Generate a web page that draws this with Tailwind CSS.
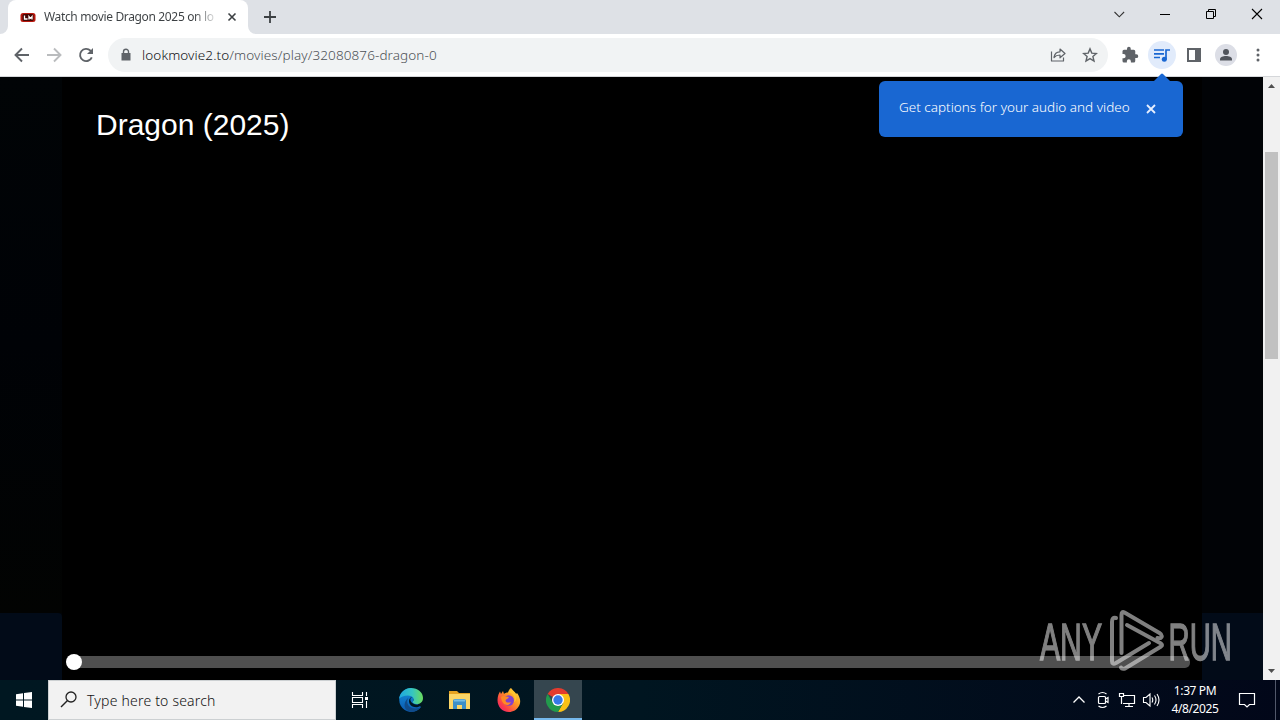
<!DOCTYPE html>
<html lang="en">
<head>
<meta charset="utf-8">
<title>Dragon (2025)</title>
<script src="https://cdn.jsdelivr.net/npm/@tailwindcss/browser@4"></script>
</head>
<body class="w-[1280px] h-[720px] overflow-hidden flex flex-col bg-black font-['Noto_Sans',sans-serif]">
<!-- Tab strip -->
<header class="h-[34px] shrink-0 bg-[#dee1e6] flex items-stretch">
  <div class="relative ml-2 w-[240px] bg-white rounded-t-lg flex items-center pl-3">
    <svg class="absolute -left-2 bottom-0" width="8" height="8"><path d="M8 0v8H0a8 8 0 0 0 8-8z" fill="#fff"/></svg>
    <svg class="absolute -right-2 bottom-0" width="8" height="8"><path d="M0 0v8h8a8 8 0 0 1-8-8z" fill="#fff"/></svg>
    <svg class="shrink-0" width="16" height="16"><rect x=".5" y="4" width="15" height="9" rx="2.5" fill="#b8180e"/><rect x="2.500" y="5" width="11" height="7" rx="1.5" fill="#420604"/><path d="M4.500 6.500V10h3M9 10.500v-3l1.500 1.800L12 7.500v3" fill="none" stroke="#fff" stroke-width="1.300"/></svg>
    <div class="ml-2 w-[170px] whitespace-nowrap text-[12px] leading-4 tracking-[-0.35px] text-transparent bg-clip-text bg-linear-to-r from-[#3c4043] from-88% to-[#3c4043]/20 to-100%">Watch movie Dragon 2025 on lo</div>
    <svg class="ml-[10px]" width="16" height="16"><path d="M4.500 4.500l7 7m0-7l-7 7" stroke="#3c4043" stroke-width="1.6"/></svg>
  </div>
  <svg class="ml-[14px] mt-[9px]" width="16" height="16"><path d="M8 2v12M2 8h12" stroke="#3c4043" stroke-width="1.8"/></svg>
  <div class="ml-auto flex items-start text-black">
    <svg width="46" height="28"><path d="M18.500 12l4.800 4.800 4.800-4.800" fill="none" stroke="#333" stroke-width="1.100"/></svg>
    <svg width="46" height="28"><path d="M18 14.500h10" stroke="#000"/></svg>
    <svg width="46" height="28"><path d="M18.500 11.500h7v7h-7zM20.500 11.500v-2h7v7h-2" fill="none" stroke="#000"/></svg>
    <svg width="46" height="28"><path d="M18 9l10 10m0-10l-10 10" stroke="#000" stroke-width="1.100"/></svg>
  </div>
</header>
<!-- Toolbar -->
<nav class="h-[43px] shrink-0 bg-white border-b border-[#d5d7da] flex items-center pl-3 relative">
  <svg class="mr-3" width="20" height="20" viewBox="0 0 20 20"><path d="M17 10H4M10 3.500L3.500 10l6.500 6.500" fill="none" stroke="#5f6368" stroke-width="1.900"/></svg>
  <svg class="mr-3" width="20" height="20" viewBox="0 0 20 20"><path d="M3 10h13M10 3.500l6.500 6.500-6.500 6.500" fill="none" stroke="#babcbe" stroke-width="1.900"/></svg>
  <svg width="20" height="20" viewBox="0 0 20 20"><path d="M15.800 12.300A6.100 6.100 0 1 1 14.500 5.700l1.500 1.600" fill="none" stroke="#5f6368" stroke-width="1.900"/><path d="M17 3v6h-6z" fill="#5f6368"/></svg>
  <div class="ml-3 w-[1000px] h-[34px] rounded-full bg-[#f1f3f4] flex items-center pl-[10px] pr-[10px]">
    <svg width="16" height="16"><path d="M3.500 6h9v7.500h-9z" fill="#5f6368"/><path d="M5.500 6.500V4.700a2.500 2.500 0 0 1 5 0v1.800" fill="none" stroke="#5f6368" stroke-width="1.400"/></svg>
    <span class="ml-2 text-[13.500px] leading-5 tracking-[0.1px] font-light whitespace-nowrap text-[#4c5055]"><span class="text-[#101114]">lookmovie2.to</span>/movies/play/32080876-dragon-0</span>
    <svg class="ml-auto" width="16" height="16" viewBox="0 0 16 16"><path d="M1.500 4.500v9.500h12v-3.500M4 10.500c.5-4 2.500-5.700 6-5.700V2l5 4.500-5 4.300V8c-2.700 0-4.500.7-6 2.500z" fill="none" stroke="#5f6368" stroke-width="1.200" stroke-linejoin="round"/></svg>
    <svg class="ml-4" width="16" height="16" viewBox="0 0 16 16"><path d="M8 1.900l1.800 4.200 4.600.4-3.500 3 1.100 4.500L8 11.600 4 14l1.100-4.500-3.500-3 4.600-.4z" fill="none" stroke="#5f6368" stroke-width="1.400"/></svg>
  </div>
  <svg class="ml-[13px] mr-px" width="18" height="18" viewBox="0 0 24 24"><path d="M20.500 11H19V7a2 2 0 0 0-2-2h-4V3.500a2.500 2.500 0 0 0-5 0V5H4a2 2 0 0 0-2 2v3.800h1.500a2.700 2.700 0 0 1 0 5.400H2V20a2 2 0 0 0 2 2h3.800v-1.500a2.700 2.700 0 0 1 5.400 0V22H17a2 2 0 0 0 2-2v-4h1.500a2.500 2.500 0 0 0 0-5z" fill="#5f6368"/></svg>
  <div class="ml-2 size-[28px] rounded-full bg-[#e1ebfb] flex items-center justify-center"><svg width="20" height="20" viewBox="0 0 20 20"><path d="M2 5h10M2 8.800h10M2 12.500h6M14 14.500V5h4" fill="none" stroke="#1967d2" stroke-width="1.700"/><circle cx="12.300" cy="14.300" r="2.500" fill="#1967d2"/></svg></div>
  <svg class="ml-[11px]" width="14" height="14"><path d="M0 0h14v14H0zM2 2v10h6V2z" fill="#5f6368" fill-rule="evenodd"/></svg>
  <div class="ml-[14px] size-[22px] rounded-full bg-[#dcdee6] flex items-center justify-center"><svg width="16" height="16"><circle cx="8" cy="5" r="3" fill="#50545c"/><path d="M2 13.500v-1.300c0-2 3-3.200 6-3.200s6 1.200 6 3.200v1.300z" fill="#50545c"/></svg></div>
  <svg class="ml-[19px]" width="4" height="16"><g fill="#5f6368"><circle cx="2" cy="3" r="1.500"/><circle cx="2" cy="8" r="1.500"/><circle cx="2" cy="13" r="1.500"/></g></svg>
  <!-- Live caption bubble -->
  <div class="absolute left-[879px] top-[47px] z-20 w-[304px] h-[56px] rounded-[6px] bg-[#1967d2] flex items-start pl-5 pt-4 text-white">
    <svg class="absolute left-[275px] -top-2" width="16" height="8"><path d="M0 8l7-7q1-1 2 0l7 7z" fill="#1967d2"/></svg>
    <span class="w-[232px] whitespace-nowrap text-[13.500px] leading-5 font-light text-white">Get captions for your audio and video</span>
    <svg class="ml-3 mt-1" width="16" height="16"><path d="M4 4l8 8m0-8l-8 8" stroke="#e6efff" stroke-width="1.800"/></svg>
  </div>
</nav>
<!-- Page -->
<main class="h-[603px] shrink-0 flex relative">
  <div class="w-[62px] flex flex-col bg-[#010307]"><div class="h-[536px] bg-linear-to-b from-[#010406] via-[#000206] to-[#020302]"></div><div class="flex-1 bg-[#020b18] rounded-tr"></div></div>
  <section class="w-[1140px] bg-black flex flex-col justify-between">
    <h1 class="pl-[34px] pt-[30px] text-[30px] leading-9 text-white font-['Liberation_Sans',sans-serif] whitespace-nowrap">Dragon (2025)</h1>
    <div class="mb-[10px] ml-1 flex items-center h-4"><span class="size-4 rounded-full bg-white z-10"></span><span class="-ml-2 w-[1116px] h-3 rounded-r-[5px] bg-[#4f4f4f]"></span></div>
  </section>
  <div class="w-[61px] flex flex-col"><div class="h-[536px] bg-[#010306]"></div><div class="flex-1 bg-[#020b18]"></div></div>
  <aside class="w-[17px] bg-[#f1f1f1] flex flex-col items-center">
    <svg width="17" height="17"><path d="M5 11l3.500-4 3.500 4z" fill="#505050"/></svg>
    <div class="mt-[58px] w-[13px] h-[207px] bg-[#c1c1c1]"></div>
    <svg class="mt-auto" width="17" height="17"><path d="M5 6l3.500 4L12 6z" fill="#505050"/></svg>
  </aside>
  <!-- Watermark -->
  <svg class="absolute left-[1030px] top-[523px]" width="220" height="80" viewBox="1030 600 220 80">
    <g opacity=".5">
      <g fill="#fff" stroke="#fff" stroke-width="1.400" font-family="Liberation Sans, sans-serif" font-size="52">
        <text x="1040" y="659.500" textLength="62" lengthAdjust="spacingAndGlyphs">ANY</text>
        <text x="1168.500" y="659.500" textLength="63.500" lengthAdjust="spacingAndGlyphs">RUN</text>
      </g>
      <g fill="none" stroke="#fff" stroke-width="4" stroke-linecap="round" stroke-linejoin="round">
        <path d="M1116 618q-4-1-4 4v39q0 4 4 2l33-20"/>
        <path d="M1121.500 653v-38q0-4 3-2.500l35 20.500q3 2 2 4t-4 1"/>
        <path d="M1127 625l34 18.500q2 1.500 0 3l-36 22q-3 1-4-1"/>
      </g>
    </g>
  </svg>
</main>
<!-- Taskbar -->
<footer class="h-10 shrink-0 bg-linear-to-r from-[#001721] via-[#001520] to-[#020719] flex items-stretch text-white">
  <div class="w-12 flex items-center justify-center"><svg width="16" height="16"><path d="M0 2.200l7-1V7.500H0zM8 1l8-1v7.500H8zM0 8.500h7v6.300l-7-1zM8 8.500h8V16l-8-1z" fill="#fff"/></svg></div>
  <div class="w-[288px] bg-[#f2f2f2] border border-[#ccd0d2] flex items-center pl-[11px]">
    <svg width="18" height="18"><circle cx="11" cy="6" r="5" fill="none" stroke="#222" stroke-width="1.300"/><path d="M7.500 9.500L1 16" stroke="#222" stroke-width="1.400"/></svg>
    <span class="ml-[9px] mt-[2px] text-[14px] leading-5 tracking-[0.2px] font-light text-[#111] whitespace-nowrap">Type here to search</span>
  </div>
  <div class="w-12 flex items-center justify-center"><svg width="18" height="18"><path d="M1.500 1v3.500h10V1M1.500 17v-3.500h10V17M1.500 6.500h10v5h-10zM15.500 1v4M15.500 10v7" fill="none" stroke="#fff" stroke-width="1.100"/><path d="M14 6h3v3h-3z" fill="#fff"/></svg></div>
  <div class="w-[54px] flex items-center justify-center">
    <svg width="24" height="24" viewBox="0 0 24 24"><defs><linearGradient id="eg" x1="0" x2="1"><stop offset="0" stop-color="#1ea7e0"/><stop offset=".55" stop-color="#35c5c2"/><stop offset="1" stop-color="#6bdc5c"/></linearGradient><linearGradient id="eb" x2="0" y2="1"><stop stop-color="#1592dc"/><stop offset="1" stop-color="#0a58b0"/></linearGradient></defs><path d="M12 0A12 12 0 1 0 22 19L14 12l9-5z" fill="url(#eb)"/><path d="M0 11C1 4 6 0 12 0c7 0 12 4.500 12 10 0 4-3 6-6 6-3.500 0-4.700-1.300-4-2.500 2.500-3-1-6-5-6-4 0-7.500 1.500-9 3.500z" fill="url(#eg)"/><path d="M9.500 9.500C6 15 10 21 17 20.500c2 0 4-1 5-1.500-2 3-6 5-10 5C5 23 3 15 9.500 9.500z" fill="#104c8b"/><path d="M13.500 9c-3 1-2.800 4 .2 6.300 2.500 2 7 1.700 9.300-.3-.3 2-2 3.500-4 4-5 1-9-2-9-6 0-2 1.500-4 3.500-4z" fill="#001721"/></svg>
  </div>
  <div class="w-[44px] flex items-center justify-center">
    <svg width="22" height="20" viewBox="0 0 22 20"><path d="M0 1h8l2 2h11v3H0z" fill="#e5a321"/><path d="M0 4h21v15H0z" fill="#fbd667"/><path d="M4 19v-8q0-2 2-2h9q2 0 2 2v8h-4v-4H8v4z" fill="#3c8fc7"/><path d="M5 10.500h11" stroke="#75bde4" stroke-width="2"/></svg>
  </div>
  <div class="w-[54px] flex items-center justify-center">
    <svg width="24" height="24" viewBox="0 0 24 24"><defs><linearGradient id="ff" x1="1" y1="0" x2="0" y2="1"><stop stop-color="#ffe84a"/><stop offset=".4" stop-color="#ff9b22"/><stop offset=".75" stop-color="#fb3c4a"/><stop offset="1" stop-color="#e31587"/></linearGradient></defs><path d="M14 0c2 3 4 3.500 5 6l1-1c3 4 4 8 2.500 12C20 22 16 24 12 24 5 24 .5 18.500.5 12 .5 8 2 5 3 3.500L4 6l2-3 1 3c1-1 2-1.500 4-1.500C11.500 2.500 12.500 1 14 0z" fill="url(#ff)"/><circle cx="11.800" cy="12.500" r="5.200" fill="#8141cd"/><path d="M4 9c3-2 5 0 8 0-1 2-3 2-3.500 3.500C9 15 12 15 14 14c-2 5-9 4-10-5z" fill="#ff8b24"/><path d="M11 4.500c5-.5 8 5 6 10 3-2 3-7 1-10l-4-3z" fill="#ffc52f"/></svg>
  </div>
  <div class="-ml-[2px] w-12 bg-[#35464f] border-b-2 border-[#76b9ed] flex items-center justify-center">
    <svg class="mt-[2px]" width="24" height="24" viewBox="0 0 24 24"><path d="M12 12L1.600 6A12 12 0 0 1 22.400 6z" fill="#e33b2e"/><path d="M12 12V6h10.400A12 12 0 0 1 12 24l5.200-9z" fill="#fbc116"/><path d="M1.600 6L7 15l5 3 5-3-5 9A12 12 0 0 1 1.600 6z" fill="#229a4c"/><circle cx="12" cy="12" r="6" fill="#fff"/><circle cx="12" cy="12" r="4.700" fill="#3579e8"/></svg>
  </div>
  <div class="ml-auto flex items-center">
    <svg width="14" height="16"><path d="M1.500 10.500L7 5l5.500 5.500" fill="none" stroke="#fff" stroke-width="1.300"/></svg>
    <svg class="ml-[10px]" width="16" height="18"><g fill="none" stroke="#fff" stroke-width="1.200"><rect x="2.500" y="5.500" width="7" height="7" rx="1"/><path d="M9.500 8l2.500-1.500v5L9.500 10M2.500 3q4-3 8 0M2.500 15q4 3 8 0"/></g></svg>
    <svg class="ml-[6px]" width="18" height="18"><path d="M5 4.500h11.500v8H5M11 12.500V15M7 15.500h8M1.500 2.500h4v3h-4zM3.500 5.500V13" fill="none" stroke="#fff" stroke-width="1.200"/></svg>
    <svg class="ml-[6px]" width="18" height="18"><path d="M1.500 6.500h2.500l4-3.500v12l-4-3.500H1.500zM10 6.500q1.500 2.500 0 5M12.500 4.500q3 4.500 0 9M15 3q4 6 0 12" fill="none" stroke="#fff" stroke-width="1.100"/></svg>
    <div class="ml-[6px] w-[58px] text-center text-[12px] leading-[18px] tracking-[-0.4px] whitespace-nowrap"><div>1:37 PM</div><div>4/8/2025</div></div>
    <svg class="ml-[14px]" width="18" height="18"><path d="M1.500 2.500h15v11h-5L9 16l-2.500-2.500h-5z" fill="none" stroke="#fff" stroke-width="1.200"/></svg>
    <div class="ml-[19px] mr-1 w-px h-10 bg-[#52586a]"></div>
  </div>
</footer>
</body>
</html>
